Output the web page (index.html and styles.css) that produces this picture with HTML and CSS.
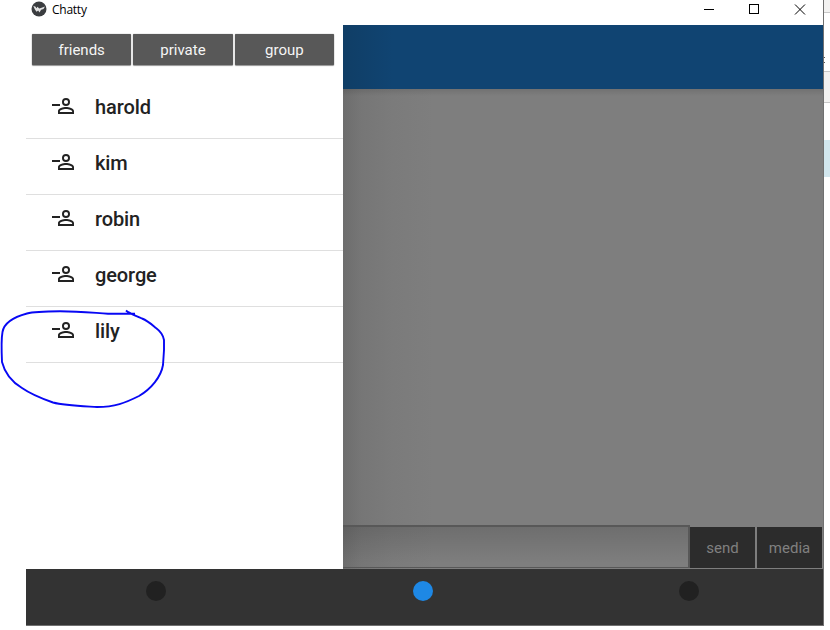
FILE: index.html
```html
<!DOCTYPE html>
<html lang="en">
<head>
<meta charset="utf-8">
<title>Chatty</title>
<link rel="stylesheet" href="styles.css">
</head>
<body>
<svg width="0" height="0" class="defs">
  <symbol id="account-minus" viewBox="0 0 24 24">
    <path fill-rule="evenodd" d="M15 4a4 4 0 1 0 0 8 4 4 0 0 0 0-8zm0 1.9a2.1 2.1 0 1 1 0 4.2 2.1 2.1 0 0 1 0-4.2zM15 13c-2.67 0-8 1.33-8 4v3h16v-3c0-2.67-5.33-4-8-4zm0 1.9c2.97 0 6.1 1.46 6.1 2.1v1.1H8.9V17c0-.64 3.1-2.1 6.1-2.1zM1 10v2h8v-2z"/>
  </symbol>
</svg>
<div class="desktop">
  <div class="window">
    <header class="titlebar">
      <svg class="logo" viewBox="0 0 16 16"><circle cx="8" cy="8" r="7.500" fill="#3b3d40"/><path d="M2.300 5l2 .4 1.200 1.800 1-1.500 1.700 1.700 1.700-.5 4.100-1.500-1.500 2.500-2.400.8-1.600 2.800-1.300-2-1.700 1.200-1.700-2.500z" fill="#e4e4e4"/></svg>
      <span class="title">Chatty</span>
      <svg class="controls" viewBox="0 0 106 14" fill="none" stroke="#000"><path d="M1 7.500h10"/><rect x="46.500" y="2.500" width="9" height="9"/><path d="M92 2.500l10 10m0-10l-10 10"/></svg>
    </header>
    <div class="main">
      <aside class="drawer">
        <nav class="tabs"><button>friends</button><button>private</button><button>group</button></nav>
        <ul class="contacts">
          <li><svg><use href="#account-minus"/></svg><span>harold</span></li>
          <li><svg><use href="#account-minus"/></svg><span>kim</span></li>
          <li><svg><use href="#account-minus"/></svg><span>robin</span></li>
          <li><svg><use href="#account-minus"/></svg><span>george</span></li>
          <li><svg><use href="#account-minus"/></svg><span>lily</span></li>
        </ul>
      </aside>
      <section class="chat">
        <div class="toolbar"></div>
        <div class="messages"></div>
        <div class="composer"><div class="input"></div><button>send</button><button>media</button></div>
      </section>
    </div>
    <footer class="bottom"><i></i><i class="active"></i><i></i></footer>
  </div>
  <div class="behind"><div class="strip s1"></div><div class="strip s2"><b></b><b></b></div><div class="strip s3"></div><div class="strip s4"></div><div class="strip s5"></div></div>
</div>
<svg class="ink" width="180" height="120" viewBox="0 300 180 120"><path d="M135 313.700H108C92 312.700 79 311.300 60 311.300C43 311.500 33 312 27 313.500C14 317 4 323 2.500 332C1 340 1.500 351 2 362C5 374 12 382 22 388C32 395 43 399 53 402.500C64 405.500 80 406 97 407C115 407 125 403 139 396C151 389 161 377 163 365L164 350V340C163 334 160 331 156 328C150 323 148 321 142 318.500C136 315.500 130 314 126 310.500"/></svg>
</body>
</html>
```

FILE: styles.css
```css
* { box-sizing: border-box; }
body { margin: 0; width: 830px; height: 630px; overflow: hidden; background: #fff; font-family: Roboto, sans-serif; }
.defs { position: absolute; }
button { border: 0; padding: 0; font: 15px Roboto, sans-serif; }
.desktop { display: flex; height: 630px; padding-left: 26px; }
.window { width: 798px; height: 626px; display: flex; flex-direction: column; border-right: 1px solid #707070; border-bottom: 1px solid #707070; }
.titlebar { height: 25px; display: flex; align-items: flex-start; padding: 1px 14px 0 5px; background: #fff; }
.logo { width: 16px; height: 16px; }
.title { margin-left: 5px; font: 12px/17px "Open Sans", sans-serif; letter-spacing: -.25px; color: #000; }
.controls { width: 106px; height: 14px; margin: 1px 0 0 auto; }
.main { height: 544px; display: flex; }
.drawer { width: 317px; background: #fff; }
.tabs { display: flex; gap: 2px; padding: 9px 9px 0 6px; }
.tabs button { flex: 1; height: 31px; color: #f5f5f5; background: #585858; border-radius: 1px; box-shadow: 0 0 1px #666, 0 1px 1px #999; }
.contacts { list-style: none; margin: 17px 0 0; padding: 0; }
.contacts li { height: 56px; padding: 0 0 6px 25px; display: flex; align-items: center; border-bottom: 1px solid #dfdfdf; font-size: 20px; line-height: 23px; font-weight: 500; letter-spacing: -.1px; color: #222; }
.contacts li:first-child { height: 57px; padding-top: 1px; }
.contacts svg { width: 24px; height: 24px; margin: -3px 20px 0 0; fill: #222; }
.chat { flex: 1; display: flex; flex-direction: column; background: linear-gradient(90deg, #6d6d6d, #767676 18px, #7b7b7b 50px, #7e7e7e 90px); }
.toolbar { height: 64px; background: linear-gradient(90deg, #103e66, #104472 50px); }
.messages { flex: 1; background: linear-gradient(rgba(0,0,0,.1), transparent 7px); }
.composer { height: 44px; display: flex; gap: 2px; padding: 1px 1px 1px 0; }
.input { flex: 1; margin: -1px -2px 0 0; border: solid #585858; border-width: 2px 2px 1px 0; background: linear-gradient(rgba(0,0,0,.13), transparent 90%); }
.composer button { width: 65px; height: 41px; margin-top: 1px; color: #808080; background: #2c2c2c; }
.bottom { height: 56px; background: #333; display: flex; }
.bottom i { flex: 1; display: flex; justify-content: center; padding-top: 12px; }
.bottom i::before { content: ""; width: 20px; height: 20px; border-radius: 50%; background: #212121; position: relative; left: -3px; }
.bottom i.active::before { background: #1e88e5; left: -2px; }
.bottom i:last-child::before { left: -1px; }
.behind { width: 6px; display: flex; flex-direction: column; }
.strip { border-bottom: 1px solid #c8c8c8; }
.s1 { height: 13px; background: #f3f2f1; }
.s2 { height: 59px; padding-top: 44px; }
.s2 b { display: block; width: 1px; height: 1px; background: #555; margin-bottom: 4px; }
.s3 { height: 31px; background: #f3f2f1; }
.s4 { height: 37px; border: 0; }
.s5 { height: 37px; background: #d2e7ee; border: 0; }
.ink { position: absolute; left: 0; top: 300px; fill: none; stroke: #0808f4; stroke-width: 1.9; stroke-linejoin: round; }
```
